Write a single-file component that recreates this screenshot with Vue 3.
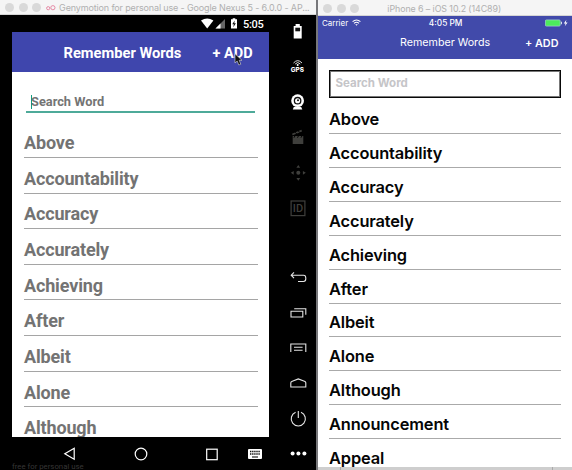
<script setup>
const androidWords = ['Above', 'Accountability', 'Accuracy', 'Accurately', 'Achieving', 'After', 'Albeit', 'Alone', 'Although']
const iosWords = [...androidWords, 'Announcement', 'Appeal']
</script>

<template>
  <main class="desktop">
    <section class="android">
      <header class="titlebar">
        <i class="dot"></i><i class="dot"></i><i class="dot"></i>
        <svg class="logo" width="10" height="6" viewBox="0 0 10 6"><circle cx="2.2" cy="3.2" r="1.6" /><circle cx="6.9" cy="2.7" r="2.1" /></svg>
        <span>Genymotion for personal use - Google Nexus 5 - 6.0.0 - AP...</span>
      </header>
      <div class="emulator">
        <div class="device">
          <div class="a-status">
            <svg width="36" height="12" viewBox="0 0 36 12">
              <path d="M0 2.5Q6.2-1.7 12.4 2.5L6.2 10.4Z" fill="#fff" />
              <path d="M14.5 10.5 24 1V10.5Z" fill="#666" /><path d="M14.5 10.5 19.5 5.5V10.5Z" fill="#fff" />
              <path d="M30 1.2H31.7V.2H34.3V1.2H36V10.5H30Z" fill="#fff" /><path d="M33.7 2.5 31.2 6.3H32.8L32.3 9.3 34.9 5.3H33.3Z" fill="#111" />
            </svg>
            <span>5:05</span>
          </div>
          <div class="a-screen">
            <div class="a-header">
              <span class="a-title">Remember Words</span>
              <span class="a-add">+ ADD</span>
              <svg class="cursor" width="9" height="13" viewBox="0 0 9 13"><path d="M1 .8V10L3.2 8 4.8 12 6.8 11.2 5.2 7.3H8Z" fill="#111" stroke="#ddd" stroke-width=".6" /></svg>
            </div>
            <div class="a-search"><i class="caret"></i><span>Search Word</span></div>
            <div class="a-list">
              <div v-for="w in androidWords" :key="w" class="a-row"><span>{{ w }}</span></div>
            </div>
          </div>
          <div class="a-nav">
            <svg width="13" height="14" viewBox="0 0 13 14"><path d="M11.2 1.3V12.3L1.8 6.8Z" /></svg>
            <svg width="14" height="14" viewBox="0 0 14 14"><circle cx="7" cy="7" r="5.8" /></svg>
            <svg width="13" height="13" viewBox="0 0 13 13"><rect x="1.7" y="1.2" width="10.5" height="10.5" /></svg>
            <svg class="keyboard" width="14" height="10" viewBox="0 0 14 10">
              <rect x="0" y="0" width="14" height="10" rx="1" fill="#fff" stroke="none" />
              <path d="M2 2.5H12M2 5H12" stroke="#111" stroke-width="1.4" stroke-dasharray="1.4 .7" />
              <path d="M4 8H10" stroke="#111" stroke-width="1.1" />
            </svg>
          </div>
          <div class="free">free for personal use</div>
        </div>
        <aside class="tools">
          <svg viewBox="0 0 24 24"><path d="M7.7 6H9.6V4H13.8V6H15.7V18.5H7.7Z" fill="#fff" /><path d="M9.3 7.7H14.1V11.3H9.3Z" fill="#111" /></svg>
          <svg viewBox="0 0 24 24" class="gps"><g fill="none" stroke="#ddd" stroke-width="1"><path d="M7.5 8Q11.7 3.3 16 8" /><path d="M9.2 9Q11.7 6 14.3 9" /></g><circle cx="11.7" cy="10" r="1" fill="#fff" /><text x="11.4" y="17.3" text-anchor="middle">GPS</text></svg>
          <svg viewBox="0 0 24 24"><circle cx="11.6" cy="10.7" r="6.4" fill="#fff" /><circle cx="11.6" cy="10.7" r="3.2" fill="none" stroke="#111" stroke-width="1.3" /><circle cx="12" cy="10.3" r="1" fill="#111" /><path d="M6.8 19.4 7.8 16.9H15.2L16.3 19.4Z" fill="#fff" /></svg>
          <svg viewBox="0 0 24 24" fill="#3f3f3c"><path d="M6.7 11H17.3V19H6.7ZM6 8.7 15.4 4.8 16 6.4 6.7 10.3Z" /><path d="M8.8 7 10.8 9M12 5.7 14 7.7M9 10.8 8 12.7M12.5 10.8 11.5 12.7M16 10.8 15 12.7" stroke="#000" /></svg>
          <svg viewBox="0 0 24 24" fill="#3f3f3c"><circle cx="12.3" cy="12.8" r="2" /><path d="M12.3 5 14.2 7.8H10.4ZM12.3 20.7 14.2 17.9H10.4ZM4.8 12.8 7.7 10.9V14.7ZM19.8 12.8 16.9 10.9V14.7Z" /></svg>
          <svg viewBox="0 0 24 24" class="ident"><rect x="5.1" y="5" width="13.8" height="14.6" fill="none" stroke="#3f3f3c" stroke-width="1.2" /><text x="12" y="16.3" text-anchor="middle">ID</text></svg>
          <span></span>
          <svg viewBox="0 0 24 24" class="line"><path d="M8 6.3 5.2 9.2 8 12.1M5.2 9.2H17.5Q19.8 9.2 19.8 12V12.8Q19.8 15.5 17.5 15.5H12" /></svg>
          <svg viewBox="0 0 24 24" class="line"><path d="M5 10.3H16.8V16H5Z" /><path d="M8.2 7.8H19.8V13.8" /></svg>
          <svg viewBox="0 0 24 24" class="line"><path d="M4.8 16V8H19.8V16M8 11.3H16.6M8 14.3H16.6" /></svg>
          <svg viewBox="0 0 24 24" class="line"><path d="M4.8 16V11.7Q4.8 10.8 6.3 10.2L12.3 7.9 18.4 10.2Q19.8 10.8 19.8 11.7V16Z" /></svg>
          <svg viewBox="0 0 24 24" class="line"><path d="M9.6 5.3A7.1 7.1 0 1 0 15 5.3M12.3 4V11" /></svg>
          <svg viewBox="0 0 24 24" fill="#fff"><circle cx="6.6" cy="11.5" r="2" /><circle cx="12.4" cy="11.5" r="2" /><circle cx="18.4" cy="11.5" r="2" /></svg>
        </aside>
      </div>
    </section>
    <div class="gap"></div>
    <section class="iphone">
      <header class="titlebar i-titlebar">
        <i class="dot"></i><i class="dot"></i><i class="dot"></i>
        <span>iPhone 6 – iOS 10.2 (14C89)</span>
      </header>
      <div class="i-status">
        <span class="carrier">Carrier</span>
        <svg width="9" height="8" viewBox="0 0 9 8" fill="none" stroke="#fff" stroke-width="1.1"><path d="M.6 2.7Q4.5-.7 8.4 2.7M2 4.3Q4.5 2.2 7 4.3" /><path d="M3.2 5.3H5.8L4.5 6.8Z" fill="#fff" stroke="none" /></svg>
        <span class="time">4:05 PM</span>
        <svg class="battery" width="24" height="8" viewBox="0 0 24 8"><rect x=".4" y=".9" width="14.8" height="6.2" rx="1" fill="#4cec5c" stroke="#a9d7cf" stroke-width=".7" /><path d="M16.2 2.7H17V5.3H16.2Z" fill="#fff" /><path d="M21.4.8 18.8 4.5H20.6L19.8 7.3 22.6 3.5H20.8Z" fill="#fff" /></svg>
      </div>
      <div class="i-header"><span class="i-title">Remember Words</span><span class="i-add">+ ADD</span></div>
      <div class="i-body">
        <div class="i-search">Search Word</div>
        <div class="i-list"><div v-for="w in iosWords" :key="w" class="i-row"><span>{{ w }}</span></div></div>
      </div>
      <footer class="i-foot"><i></i></footer>
    </section>
  </main>
</template>

<style>
body { margin: 0; background: #000; overflow: hidden; }
</style>
<style scoped>
* { box-sizing: border-box; }
svg { display: block; flex: none; }
span { white-space: nowrap; }
.desktop { display: flex; width: 572px; height: 470px; overflow: hidden; font-family: Roboto, sans-serif; }
.android { width: 316px; display: flex; flex-direction: column; background: #000; }
.titlebar { flex: none; height: 15px; display: flex; align-items: center; background: #f5f5f5; border-bottom: 1px solid #d5d5d5; color: #b0b0b0; font: 9px/14px Inter, sans-serif; letter-spacing: -.14px; padding: 1px 0 0 5px; }
.dot { flex: none; width: 9px; height: 9px; border-radius: 50%; background: #d9d9d9; margin-right: 4.7px; }
.logo { margin: 0 3px 0 0; fill: none; stroke: #e58aa5; stroke-width: 1; }
.emulator { flex: 1; display: flex; min-height: 0; }
.device { width: 286px; padding-left: 12px; display: flex; flex-direction: column; }
.a-status { height: 17px; width: 257px; display: flex; justify-content: flex-end; align-items: center; gap: 5px; padding-right: 5.5px; color: #fff; font: 500 11px/17px Roboto, sans-serif; letter-spacing: -.3px; padding-top: 1px; }
.a-status svg { margin-right: 1px; }
.a-screen { width: 257px; height: 405px; background: #fff; overflow: hidden; flex: none; }
.a-header { height: 40px; background: #3f46ad; color: #fff; display: flex; align-items: center; position: relative; padding: 2px 0 0 51.5px; font-weight: 700; }
.a-title { font-size: 14.7px; width: 149px; }
.a-add { font-size: 14.5px; }
.cursor { position: absolute; left: 222px; top: 21px; }
.a-search { margin: 19px 0 0 14px; width: 229px; height: 22px; border-bottom: 2px solid #4eaa99; display: flex; align-items: center; color: #747474; font: 700 12.8px/20px Roboto, sans-serif; padding: 2px 0 0 5px; }
.caret { width: 1px; height: 14px; background: #159b82; margin-right: -1px; }
.a-list { padding: 9.2px 11.5px 0 12px; }
.a-row { height: 35.67px; border-bottom: 1px solid #a5a5a5; color: #737373; font: 700 18px/21px Roboto, sans-serif; letter-spacing: -.15px; padding-top: 9.8px; }
.a-nav { height: 34px; width: 257px; display: flex; align-items: center; padding-left: 51px; fill: none; stroke: #fff; stroke-width: 1.2; flex: none; }
.a-nav svg + svg { margin-left: 57.5px; }
.a-nav svg.keyboard { margin-left: 30px; }
.free { color: #363636; font: 7.8px/9px Roboto, sans-serif; margin-top: -9px; }
.tools { width: 24px; display: grid; grid-template-rows: repeat(13, 35.2px); align-items: center; margin-top: -1px; }
.tools svg { width: 24px; height: 24px; }
.gps text { font: 800 6.4px Inter, sans-serif; fill: #fff; }
.ident text { font: 500 11px Roboto, sans-serif; fill: #3f3f3c; }
.line { fill: none; stroke: #e5e5e5; stroke-width: 1.1; }
.gap { width: 2px; background: #77777a; }
.iphone { width: 254px; background: #fff; display: flex; flex-direction: column; color: #fff; font-family: Inter, sans-serif; }
.i-titlebar { height: 16px; font-size: 8.9px; letter-spacing: -.09px; padding-top: 2px; }
.i-titlebar span { margin-left: 23.3px; }
.i-status { height: 14px; background: #414aaa; display: flex; align-items: center; padding: 0 3px 0 4px; font-size: 8px; flex: none; }
.carrier { width: 30px; }
.time { margin-left: 68px; width: 116.7px; font-weight: 500; font-size: 8.3px; }
.i-header { height: 29px; background: #414aaa; display: flex; padding: 5.6px 0 0 82px; line-height: 14px; flex: none; }
.i-title { font-size: 10.7px; width: 125px; }
.i-add { font-size: 10.8px; font-weight: 600; padding-top: 1px; }
.i-body { flex: 1; min-height: 0; overflow: hidden; padding: 10.5px 11px 0; }
.i-search { height: 28px; border: 1px solid #080808; box-shadow: inset 0 0 0 1px #777; color: #c5c5c8; font-size: 11.5px; font-weight: 700; line-height: 25px; padding-left: 5.5px; }
.i-list { padding-top: 3px; }
.i-row { height: 33.85px; border-bottom: 1px solid #aaa; color: #050505; font-size: 16.4px; letter-spacing: -.13px; line-height: 20px; font-weight: 600; padding-top: 8.9px; }
.i-foot { height: 3px; background: #cecece; padding: 0 19px 0 22px; }
.i-foot i { display: block; height: 3px; border: solid #aaa; border-width: 0 1px; }
</style>
